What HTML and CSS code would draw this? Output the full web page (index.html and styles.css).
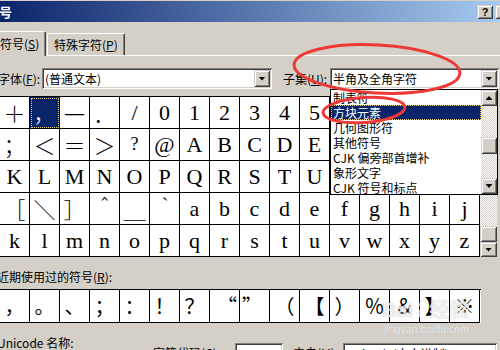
FILE: index.html
```html
<!DOCTYPE html>
<html lang="zh-CN">
<head>
  <meta charset="UTF-8" />
  <meta name="viewport" content="width=device-width, initial-scale=1.0"/>
  <title>符号</title>
  <link rel="stylesheet" href="styles.css">
</head>
<body>
  <div class="window">
    <div class="titlebar">
      <span class="title">符号</span>
      <div class="caption-btns">
        <span class="cbtn">?</span>
        <span class="cbtn">×</span>
      </div>
    </div>

    <div class="tabs">
      <div class="tab active">符号(<u>S</u>)</div>
      <div class="tab">特殊字符(<u>P</u>)</div>
    </div>

    <div class="font-row">
      <span class="lbl font-lbl">字体(<u>F</u>):</span>
      <div class="combo font-combo">
        <span class="combo-text">(普通文本)</span>
        <span class="drop-btn"></span>
      </div>
      <span class="lbl subset-lbl">子集(<u>U</u>):</span>
      <div class="combo subset-combo">
        <span class="combo-text">半角及全角字符</span>
        <span class="drop-btn"></span>

        <div class="droplist">
          <ul class="items">
            <li>制表符</li>
            <li class="hl">方块元素</li>
            <li>几何图形符</li>
            <li>其他符号</li>
            <li>CJK 偏旁部首增补</li>
            <li>象形文字</li>
            <li>CJK 符号和标点</li>
          </ul>
          <div class="scrollbar">
            <span class="sbtn up"></span>
            <span class="track top-track"></span>
            <span class="thumb"></span>
            <span class="track"></span>
            <span class="sbtn down"></span>
          </div>
        </div>
      </div>
    </div>

    <div class="grid-row">
      <div class="grid">
        <span class="cell cjk">＋</span><span class="cell cjk sel">，</span><span class="cell dash">—</span><span class="cell cjk">．</span><span class="cell">/</span><span class="cell">0</span><span class="cell">1</span><span class="cell">2</span><span class="cell">3</span><span class="cell">4</span><span class="cell">5</span><span class="cell">6</span><span class="cell">7</span><span class="cell">8</span><span class="cell">9</span><span class="cell cjk">：</span>
        <span class="cell cjk">；</span><span class="cell cjk">＜</span><span class="cell cjk">＝</span><span class="cell cjk">＞</span><span class="cell small">?</span><span class="cell">@</span><span class="cell">A</span><span class="cell">B</span><span class="cell">C</span><span class="cell">D</span><span class="cell">E</span><span class="cell">F</span><span class="cell">G</span><span class="cell">H</span><span class="cell">I</span><span class="cell">J</span>
        <span class="cell">K</span><span class="cell">L</span><span class="cell">M</span><span class="cell">N</span><span class="cell">O</span><span class="cell">P</span><span class="cell">Q</span><span class="cell">R</span><span class="cell">S</span><span class="cell">T</span><span class="cell">U</span><span class="cell">V</span><span class="cell">W</span><span class="cell">X</span><span class="cell">Y</span><span class="cell">Z</span>
        <span class="cell cjk">［</span><span class="cell cjk">＼</span><span class="cell cjk">］</span><span class="cell cjk">＾</span><span class="cell cjk">＿</span><span class="cell cjk r">｀</span><span class="cell">a</span><span class="cell">b</span><span class="cell">c</span><span class="cell">d</span><span class="cell">e</span><span class="cell">f</span><span class="cell">g</span><span class="cell">h</span><span class="cell">i</span><span class="cell">j</span>
        <span class="cell">k</span><span class="cell">l</span><span class="cell">m</span><span class="cell">n</span><span class="cell">o</span><span class="cell">p</span><span class="cell">q</span><span class="cell">r</span><span class="cell">s</span><span class="cell">t</span><span class="cell">u</span><span class="cell">v</span><span class="cell">w</span><span class="cell">x</span><span class="cell">y</span><span class="cell">z</span>
      </div>
      <div class="scrollbar grid-scroll">
        <span class="sbtn up"></span>
        <span class="track"></span>
        <span class="thumb"></span>
        <span class="sbtn down"></span>
      </div>
    </div>

    <div class="lbl recent-lbl">近期使用过的符号(<u>R</u>):</div>
    <div class="recent">
      <span class="cell">，</span><span class="cell">。</span><span class="cell">、</span><span class="cell">；</span><span class="cell">：</span><span class="cell">！</span><span class="cell">？</span><span class="cell r">“</span><span class="cell l">”</span><span class="cell">（</span><span class="cell">【</span><span class="cell">）</span><span class="cell">％</span><span class="cell">＆</span><span class="cell">】</span><span class="cell">※</span>
    </div>

    <div class="bottom-row">
      <span class="lbl uni-lbl">Unicode 名称:</span>
      <span class="lbl code-lbl">字符代码(<u>C</u>):</span>
      <span class="field code-field">FF0C</span>
      <span class="lbl from-lbl">来自(<u>M</u>):</span>
      <span class="field from-field">Unicode(十六进制)</span>
    </div>

    <div class="watermark">
      <span class="wm-logo">Bai<svg width="14" height="16" viewBox="0 0 14 16"><ellipse cx="3" cy="5" rx="2" ry="3"/><ellipse cx="7" cy="2.5" rx="2" ry="2.5"/><ellipse cx="11" cy="5" rx="2" ry="3"/><path d="M7 7c-3 0-5 4-5 6s2 3 5 2c3 1 5 0 5-2s-2-6-5-6z"/></svg>经验</span>
      <span class="wm-url">jingyan.baidu.com</span>
    </div>

    <svg class="marks" width="500" height="350" viewBox="0 0 500 350">
      <ellipse cx="377" cy="69" rx="83" ry="24" transform="rotate(3 377 69)"/>
      <ellipse cx="364" cy="110" rx="41" ry="12.5" transform="rotate(-4 364 110)"/>
    </svg>
  </div>
</body>
</html>
```

FILE: styles.css
```css
body {
  margin: 0;
  width: 500px;
  height: 350px;
  overflow: hidden;
  background: #d4d0c8;
  font-family: "Noto Sans CJK SC", sans-serif;
  font-size: 12px;
  color: #000;
}
u {
  text-underline-offset: 1px;
}
.window {
  position: relative;
  height: 350px;
  padding-top: 1px;
  box-sizing: border-box;
}

/* title bar */
.titlebar {
  height: 21px;
  display: flex;
  align-items: center;
  justify-content: space-between;
  background: linear-gradient(to right, #0a246a, #a6caf0);
}
.title {
  margin-left: -14px;
  color: #fff;
  font-weight: bold;
  font-size: 13px;
  line-height: 21px;
}
.caption-btns {
  display: flex;
  gap: 2px;
  margin-right: -11px;
}
.cbtn, .drop-btn, .sbtn, .thumb {
  background: #d4d0c8;
  box-shadow: inset 1px 1px #d4d0c8, inset -1px -1px #404040, inset 2px 2px #fff, inset -2px -2px #808080;
}
.cbtn {
  width: 16px;
  height: 14px;
  display: flex;
  align-items: center;
  justify-content: center;
  font: bold 11px "Liberation Sans", sans-serif;
}

/* tabs */
.tabs {
  display: flex;
  align-items: flex-end;
  height: 24px;
  margin-top: 9px;
  border-bottom: 1px solid #fff;
}
.tab {
  height: 22px;
  box-sizing: border-box;
  display: flex;
  align-items: center;
  padding: 0 6px;
  line-height: 14px;
  white-space: nowrap;
  border-top: 1px solid #fff;
  border-left: 1px solid #fff;
  border-right: 1px solid #404040;
  border-radius: 2px 2px 0 0;
  box-shadow: inset -1px 0 #808080;
}
.tab.active {
  height: 25px;
  width: 50px;
  margin-bottom: -1px;
  margin-left: -4px;
  padding: 0 0 0 3px;
  background: #d4d0c8;
}
.tab + .tab {
  margin-left: 1px;
}

/* font / subset row */
.lbl {
  line-height: 16px;
  white-space: nowrap;
}
.font-row {
  display: flex;
  align-items: center;
  height: 21px;
  margin-top: 12px;
}
.font-lbl {
  margin-left: -2px;
  width: 44px;
}
.subset-lbl {
  margin-left: 11px;
  width: 47px;
}
.combo, .field {
  height: 21px;
  box-sizing: border-box;
  background: #fff;
  box-shadow: inset 1px 1px #808080, inset -1px -1px #fff, inset 2px 2px #404040, inset -2px -2px #d4d0c8;
}
.combo {
  position: relative;
  display: flex;
  align-items: center;
  padding: 2px;
}
.font-combo {
  width: 230px;
}
.subset-combo {
  width: 169px;
}
.combo-text {
  flex: 1;
  padding-left: 1px;
  line-height: 17px;
  white-space: nowrap;
}
.drop-btn {
  width: 16px;
  height: 17px;
}
.drop-btn, .sbtn {
  display: flex;
  align-items: center;
  justify-content: center;
}
.drop-btn::after, .sbtn::after {
  content: "";
  width: 7px;
  height: 4px;
  background: #000;
  clip-path: polygon(0 0, 100% 0, 50% 100%);
}
.sbtn.up::after {
  clip-path: polygon(50% 0, 100% 100%, 0 100%);
}

/* open subset list */
.droplist {
  position: absolute;
  top: 100%;
  left: 0;
  z-index: 2;
  width: 168px;
  height: 106px;
  box-sizing: border-box;
  display: flex;
  border: 1px solid #000;
  background: #fff;
}
.items {
  flex: 1;
  margin: 0;
  padding: 0;
  list-style: none;
  overflow: hidden;
}
.items li {
  height: 15px;
  line-height: 15px;
  padding-left: 2px;
  white-space: nowrap;
}
.items .hl {
  background: #0a246a;
  color: #fff;
  outline: 1px dotted #e8d060;
  outline-offset: -1px;
}

/* scrollbars */
.scrollbar {
  width: 16px;
  display: flex;
  flex-direction: column;
}
.sbtn {
  height: 16px;
  flex: none;
}
.track {
  flex: 1;
  background: repeating-conic-gradient(#fff 0 25%, #d4d0c8 0 50%) 0 0 / 2px 2px;
}
.top-track {
  flex: none;
  height: 31px;
}
.thumb {
  height: 17px;
  flex: none;
}
.grid-scroll {
  width: 17px;
}
.grid-scroll .thumb {
  height: 16px;
}
.grid-scroll .down {
  height: 15px;
}

/* character grid */
.grid-row {
  display: flex;
  margin-top: 7px;
  margin-left: -1px;
}
.grid, .recent {
  display: grid;
  grid-template-columns: repeat(16, 30px);
  border-top: 1px solid #000;
  border-left: 1px solid #000;
  background: #fff;
}
.grid {
  grid-auto-rows: 32px;
}
.cell {
  box-sizing: border-box;
  border-right: 1px solid #000;
  border-bottom: 1px solid #000;
  overflow: hidden;
  text-align: center;
  white-space: nowrap;
}
.grid .cell {
  font-family: "Liberation Serif", "Noto Sans CJK SC", serif;
  font-size: 22px;
  line-height: 31px;
}
.grid .cjk {
  font-family: "Noto Sans CJK SC", sans-serif;
  font-weight: 300;
}
.grid .dash {
  font-size: 19px;
  font-weight: bold;
}
.grid .small {
  font-size: 18px;
}
.grid .sel {
  background: #0a246a;
  color: #fff;
  outline: 1px dotted #e8d060;
  outline-offset: -2px;
}
.cell.r {
  text-align: right;
  padding-right: 2px;
}
.cell.l {
  text-align: left;
  padding-left: 2px;
}

/* recently used */
.recent-lbl {
  padding: 12px 0 4px;
  margin-left: -3px;
}
.recent {
  width: 481px;
  margin-left: -1px;
  grid-auto-rows: 33px;
}
.recent .cell {
  font-size: 20px;
  line-height: 32px;
}

/* bottom controls */
.bottom-row {
  display: flex;
  align-items: flex-start;
}
.uni-lbl {
  width: 156px;
  margin: 12px 0 0 -3px;
}
.code-lbl {
  width: 82px;
  margin-top: 22px;
}
.field {
  margin-top: 20px;
  padding: 2px 3px;
  line-height: 17px;
  white-space: nowrap;
}
.code-field {
  width: 48px;
}
.from-lbl {
  width: 50px;
  margin: 22px 0 0 10px;
}
.from-field {
  width: 154px;
}

/* overlays: watermark and red annotation marks */
.watermark {
  position: absolute;
  left: 382px;
  top: 298px;
  display: flex;
  flex-direction: column;
  align-items: flex-start;
  color: rgba(255, 255, 255, 0.75);
  pointer-events: none;
}
.wm-logo {
  display: flex;
  align-items: center;
  font: bold 20px "Liberation Sans", "Noto Sans CJK SC", sans-serif;
  line-height: 24px;
  text-shadow: 0 0 1px rgba(120, 120, 120, 0.5);
}
.wm-logo svg {
  fill: rgba(255, 255, 255, 0.7);
  margin: 0 1px;
}
.wm-url {
  margin-left: 2px;
  font: 10.5px "Liberation Sans", sans-serif;
  line-height: 14px;
  text-shadow: 0 0 1px rgba(120, 120, 120, 0.4);
}
.marks {
  position: absolute;
  left: 0;
  top: 0;
  z-index: 3;
  pointer-events: none;
}
.marks ellipse {
  fill: none;
  stroke: #ee3a36;
  stroke-width: 3;
}
```
